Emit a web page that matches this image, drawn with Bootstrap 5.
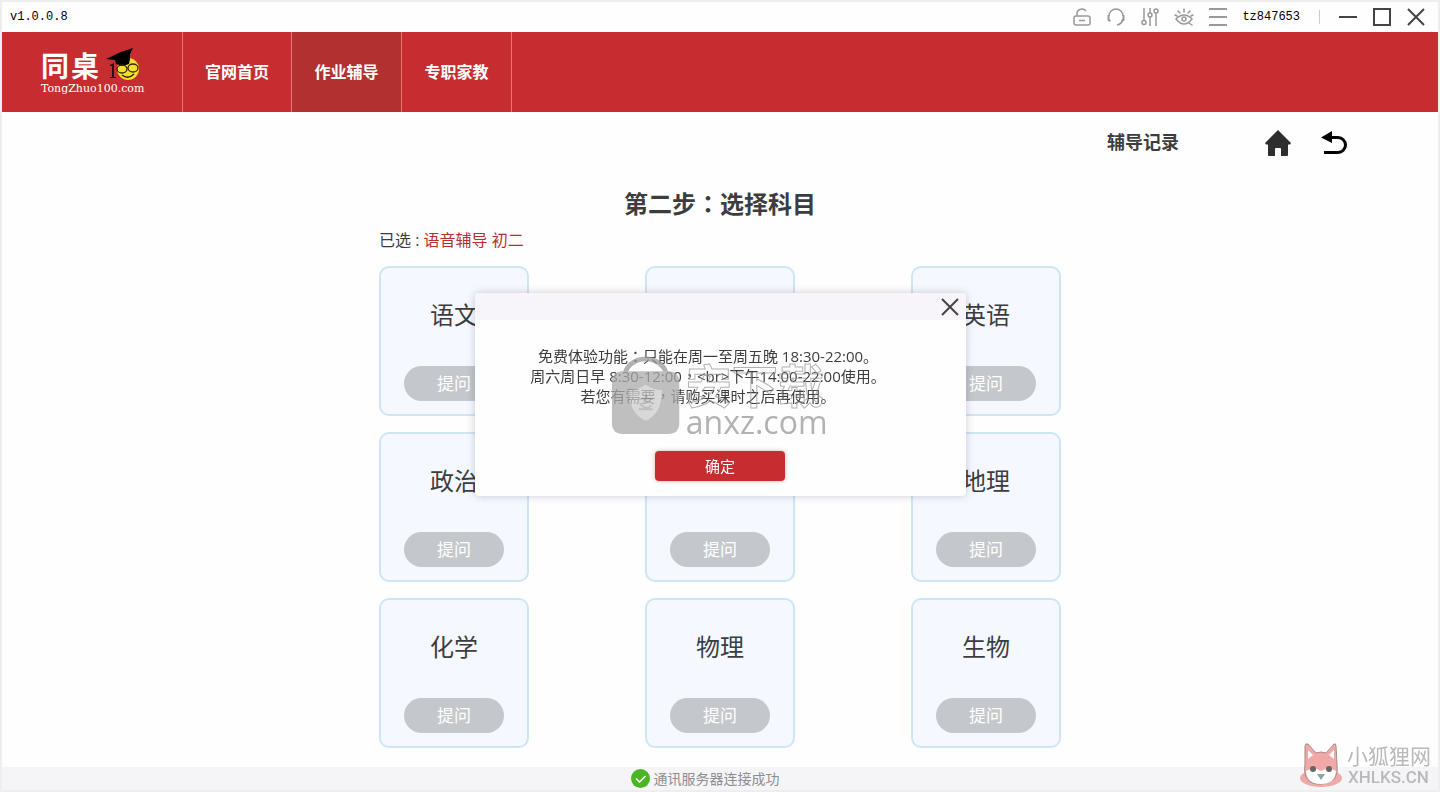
<!DOCTYPE html>
<html lang="zh-CN">
<head>
<meta charset="utf-8">
<meta name="viewport" content="width=device-width, initial-scale=1">
<title>同桌100 作业辅导</title>
<link href="https://cdn.jsdelivr.net/npm/bootstrap@5.3.0/dist/css/bootstrap.min.css" rel="stylesheet">
<style>
  body { font-family: "Open Sans", "Noto Sans CJK SC", sans-serif; background: #fefefe; color: #3d3d3f; border: 2px solid #eee; }
  .colon { font-family: "Noto Sans CJK TC", sans-serif; }
  .titlebar { height: 30px; padding: 0 12px 0 8px; }
  .mono-text { font: 12px/20px "Liberation Mono", monospace; color: #000; }
  .tool-btn { border: 0; background: none; padding: 0; width: 20px; height: 20px; display: flex; }
  .tool-btn svg, .tool-link svg { width: 100%; height: 100%; }
  .tool-btn svg { fill: none; stroke: #999; stroke-width: 1.5; }
  .tool-btn.win svg { stroke: #444; stroke-width: 2; }
  .tool-gap { gap: 14px; }
  .tool-rule { width: 1px; height: 14px; background: #ccc; margin: 0 4px 0 5px; }
  .site-header { background: #c62d30; height: 80px; }
  .brand-box { width: 180px; padding: 16px 0 0 39px; color: #fff; text-decoration: none; }
  .brand-name { font: 700 28px/34px "Noto Sans CJK SC", sans-serif; height: 33px; gap: 2px; }
  .brand-name svg { width: 36px; height: 34px; margin-left: 4px; }
  .brand-site { font: 11px/16px "DejaVu Serif", serif; }
  .top-link { width: 110px; border-right: 1px solid #ee7476; color: #fff; font-weight: 700; font-size: 16px; text-decoration: none; }
  .top-link:first-child { border-left: 1px solid #ee7476; }
  .top-link.active { background: #b23130; }
  .record-bar { height: 61px; padding-right: 90px; }
  .record-link { font-size: 18px; font-weight: 700; color: #3d3d3f; text-decoration: none; margin-right: 85px; }
  .tool-link { width: 28px; height: 28px; display: flex; }
  .step-title { font-size: 24px; line-height: 32px; font-weight: 700; margin: 14px 0 8px; }
  .chosen { font-size: 16px; line-height: 24px; margin-bottom: 14px; }
  .chosen span { color: #b23130; }
  .subject-area { max-width: 682px; }
  .subject-grid { display: grid; grid-template-columns: repeat(3, 150px); row-gap: 16px; }
  .subject { height: 150px; border: 2px solid #cfe5f5; border-radius: 10px; background: #f5f9ff; padding: 29px 0 13px; }
  .subject h2 { font-size: 24px; line-height: 36px; font-weight: 400; margin: 0; }
  .ask { width: 100px; height: 35px; border: 0; border-radius: 18px; background: #c4c8cc; color: #fff; font-size: 17px; line-height: 35px; padding: 0; }
  .status { height: 23px; background: #f5f4f7; color: #8e8e90; font-size: 14px; gap: 4px; padding-right: 30px; }
  .status svg { width: 19px; height: 19px; }
  .overlay { pointer-events: none; z-index: 5; padding-bottom: 3px; }
  .notice { width: 491px; border-radius: 4px; background: #fefefe; box-shadow: 0 0 8px rgba(60, 50, 80, .25); pointer-events: auto; }
  .notice-head { height: 27px; background: #f7f5f9; border-radius: 4px 4px 0 0; padding-right: 6px; }
  .notice-text { font-size: 15px; line-height: 20px; padding-right: 24px; margin: 26px 0 45px; }
  .confirm { width: 130px; height: 30px; border: 0; border-radius: 4px; background: #c62d30; color: #fff; font-size: 15px; line-height: 30px; padding: 0; margin-bottom: 15px; box-shadow: 0 0 4px rgba(198, 45, 48, .4); }
  .mark-center { inset: 61px 138px auto 136px; gap: 6px; opacity: .75; pointer-events: none; }
  .mark-center svg { width: 72px; height: 80px; }
  .mark-cn { font: 700 46px/50px "Noto Sans CJK SC", sans-serif; color: transparent; -webkit-text-stroke: 1px #999; }
  .mark-en { font: 400 32px/28px "Open Sans", sans-serif; color: #999; }
  .mark-corner { right: 9px; bottom: 4px; z-index: 6; gap: 4px; color: #b9b9bb; pointer-events: none; }
  .mark-corner svg { width: 44px; height: 46px; }
  .mark-corner b { font-size: 21px; line-height: 24px; font-weight: 400; display: block; }
  .mark-corner em { font: 500 17px/18px Roboto, sans-serif; display: block; padding-left: 1px; }
</style>
</head>
<body class="d-flex flex-column min-vh-100">
<div class="titlebar d-flex align-items-center justify-content-between">
  <span class="mono-text">v1.0.0.8</span>
  <div class="d-flex align-items-center tool-gap">
    <button class="tool-btn" aria-label="锁定"><svg viewBox="0 0 20 20"><rect x="2" y="9" width="16" height="9" rx="2"/><path d="M5 9V6a5 4.500 0 0 1 9-2M7 13.500h6"/></svg></button>
    <button class="tool-btn" aria-label="客服"><svg viewBox="0 0 20 20"><path d="M3 9a7 7 0 0 1 14 0M17 12q-1 5-6 6"/><path d="M2.500 8v5l2 1M17.500 8v5l-2 1" stroke-width="2"/></svg></button>
    <button class="tool-btn" aria-label="设置"><svg viewBox="0 0 20 20"><path d="M4 1v12M10 1v5M10 10v9M16 6v13"/><circle cx="4" cy="15.500" r="2"/><circle cx="10" cy="8" r="2"/><circle cx="16" cy="4" r="2"/></svg></button>
    <button class="tool-btn" aria-label="护眼"><svg viewBox="0 0 20 20" stroke-linecap="round"><path d="M2 12q8-8 16 0-8 10-16 0zM10 2v3M4 4l2 2M16 4l-2 2M1 8l2 1M19 8l-2 1M15 16l3 2"/><circle cx="10" cy="12" r="2"/></svg></button>
    <button class="tool-btn" aria-label="菜单"><svg viewBox="0 0 20 20"><path d="M1 2h18M1 10h18M1 18h18" stroke-width="2"/></svg></button>
    <span class="mono-text">tz847653</span>
    <span class="tool-rule"></span>
    <button class="tool-btn win" aria-label="最小化"><svg viewBox="0 0 20 20"><path d="M1 10h18"/></svg></button>
    <button class="tool-btn win" aria-label="最大化"><svg viewBox="0 0 20 20"><path d="M2 2h16v16H2z"/></svg></button>
    <button class="tool-btn win" aria-label="关闭"><svg viewBox="0 0 20 20"><path d="M2 2l16 16M18 2L2 18"/></svg></button>
  </div>
</div>

<header class="site-header d-flex">
  <a href="#" class="brand-box">
    <div class="brand-name d-flex align-items-center"><span>同</span><span>桌</span>
      <svg viewBox="0 0 36 34"><path d="M5 17l4-2v14h2v1H5v-1h2V18H5z" fill="#24100e"/><circle cx="23" cy="21" r="11" fill="#f4dd2c"/><path d="M1 11L16 4l12-4-3 6 0 5-1 5-6 2-7-2-1-4z" fill="#000"/><g fill="none" stroke="#2b2208" stroke-width="1.300"><ellipse cx="17" cy="21" rx="5" ry="4"/><ellipse cx="28" cy="20" rx="5" ry="4"/><path d="M17 27q6 5 12-1"/></g></svg>
    </div>
    <div class="brand-site">TongZhuo100.com</div>
  </a>
  <nav class="d-flex">
    <a href="#" class="top-link d-flex align-items-center justify-content-center">官网首页</a>
    <a href="#" class="top-link active d-flex align-items-center justify-content-center">作业辅导</a>
    <a href="#" class="top-link d-flex align-items-center justify-content-center">专职家教</a>
  </nav>
</header>

<main class="flex-grow-1">
  <div class="record-bar d-flex align-items-center justify-content-end">
    <a href="#" class="record-link">辅导记录</a>
    <div class="d-flex gap-4 align-items-center">
      <a href="#" class="tool-link me-1" aria-label="首页"><svg viewBox="0 0 28 28"><path d="M14 1L1 14l1 1.500h2V26q0 1 1 1h6v-7q0-1 1-1h4q1 0 1 1v7h6q1 0 1-1V15.500h2L27 14z" fill="#2e2d30"/></svg></a>
      <a href="#" class="tool-link" aria-label="返回"><svg viewBox="0 0 28 28"><path d="M1 8.500L12 2v12z" fill="#000"/><path d="M10 8.500h8a7.500 7.500 0 0 1 0 15H4" fill="none" stroke="#000" stroke-width="3"/></svg></a>
    </div>
  </div>
  <div class="subject-area mx-auto">
    <h1 class="step-title text-center">第二步<span class="colon" lang="zh-TW">：</span>选择科目</h1>
    <p class="chosen">已选 : <span>语音辅导 初二</span></p>
    <div class="subject-grid justify-content-between text-center">
      <section class="subject d-flex flex-column align-items-center justify-content-between"><h2>语文</h2><button class="ask">提问</button></section>
      <section class="subject"></section>
      <section class="subject d-flex flex-column align-items-center justify-content-between"><h2>英语</h2><button class="ask">提问</button></section>
      <section class="subject d-flex flex-column align-items-center justify-content-between"><h2>政治</h2><button class="ask">提问</button></section>
      <section class="subject d-flex flex-column align-items-center justify-content-end"><button class="ask">提问</button></section>
      <section class="subject d-flex flex-column align-items-center justify-content-between"><h2>地理</h2><button class="ask">提问</button></section>
      <section class="subject d-flex flex-column align-items-center justify-content-between"><h2>化学</h2><button class="ask">提问</button></section>
      <section class="subject d-flex flex-column align-items-center justify-content-between"><h2>物理</h2><button class="ask">提问</button></section>
      <section class="subject d-flex flex-column align-items-center justify-content-between"><h2>生物</h2><button class="ask">提问</button></section>
    </div>
  </div>
</main>

<footer class="status d-flex align-items-center justify-content-center">
  <svg viewBox="0 0 19 19"><circle cx="9.500" cy="9.500" r="9.500" fill="#4cb526"/><path d="M5 9.500l3.500 3.500L14.500 7" fill="none" stroke="#fff" stroke-width="1.500"/></svg>
  <span>通讯服务器连接成功</span>
</footer>

<div class="overlay position-fixed top-0 start-0 w-100 h-100 d-flex align-items-center justify-content-center">
  <div class="notice position-relative text-center" role="dialog" aria-label="提示">
    <div class="notice-head d-flex justify-content-end align-items-center">
      <button class="tool-btn win" aria-label="关闭提示"><svg viewBox="0 0 20 20"><path d="M2 2l16 16M18 2L2 18"/></svg></button>
    </div>
    <p class="notice-text">免费体验功能<span class="colon" lang="zh-TW">：</span>只能在周一至周五晚 18:30-22:00。<br>周六周日早 8:30-12:00<span class="colon" lang="zh-TW">，</span>&lt;br&gt;下午14:00-22:00使用。<br>若您有需要<span class="colon" lang="zh-TW">，</span>请购买课时之后再使用。</p>
    <button class="confirm">确定</button>
    <div class="mark-center position-absolute d-flex align-items-start">
      <svg viewBox="0 0 72 84" preserveAspectRatio="none"><path d="M14 28V25a22 20 0 0 1 44 0v3" fill="none" stroke="#999" stroke-width="5"/><rect x="1" y="18" width="70" height="66" rx="10" fill="#aaa"/><path d="M36 32q8 6 17 6 0 25-17 32-17-7-17-32 9 0 17-6z" fill="#ccc"/><path d="M28 47h16M36 43v5M30 52q6 8 12 2M29 58h14" fill="none" stroke="#aaa" stroke-width="2"/></svg>
      <div class="text-start pt-1 text-nowrap"><div class="mark-cn">安下载</div><div class="mark-en">anxz.com</div></div>
    </div>
  </div>
</div>

<div class="mark-corner position-fixed d-flex align-items-center">
  <svg viewBox="0 0 44 46"><ellipse cx="22" cy="36" rx="21" ry="9" fill="#eeaaa8"/><path d="M6 22L6 4q0-3 3-2l8 9q5-2 10 0L35 2q2-1 2 2l1 18q3 19-16 20T6 22z" fill="#f1a9a7" stroke="#a68a8a"/><path d="M9 17V8l5 5zM35 17V8l-5 5z" fill="#fff"/><path d="M7 29q8-5 15 0 8-5 15 0-1 13-15 13T7 29z" fill="#fff"/><circle cx="14" cy="27" r="3" fill="#666"/><circle cx="30" cy="27" r="3" fill="#666"/><path d="M18 32h8l-4 6z" fill="#8aa5a5"/></svg>
  <div><b>小狐狸网</b><em>XHLKS.CN</em></div>
</div>
<script src="https://cdn.jsdelivr.net/npm/bootstrap@5.3.0/dist/js/bootstrap.bundle.min.js"></script>
</body>
</html>
